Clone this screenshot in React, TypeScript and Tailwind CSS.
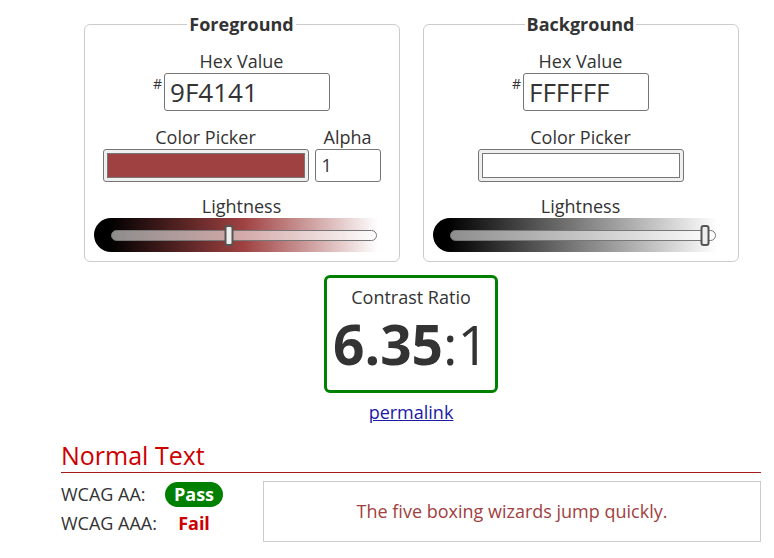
import React from "react";

const font = { fontFamily: "'Open Sans', 'Liberation Sans', sans-serif" };

type SliderProps = { from: string; mid: string; to: string; pos: number };

const LightnessSlider: React.FC<SliderProps> = ({ from, mid, to, pos }) => (
  <div
    className="relative mx-auto h-[34px] w-[296px] rounded-full"
    style={{ background: `linear-gradient(to right, ${from} 5%, ${mid}, ${to} 96%)` }}
  >
    <div className="absolute left-[17px] right-[13px] top-[12px] h-[11px] rounded-full border border-[#777] bg-white/55">
      <div
        className="absolute top-[-6px] h-[21px] w-[9px] -translate-x-1/2 rounded-[3px] border-2 border-[#555] bg-[#eee]"
        style={{ left: `${pos}%` }}
      />
    </div>
  </div>
);

type PanelProps = {
  title: string;
  hex: string;
  hexWidth: string;
  swatch: string;
  alpha?: boolean;
  gradientMid: string;
  pos: number;
};

const ColorPanel: React.FC<PanelProps> = ({ title, hex, hexWidth, swatch, alpha, gradientMid, pos }) => (
  <fieldset className="w-[316px] rounded-[6px] border border-[#ccc] px-0 pb-[9px]">
    <legend className="mx-auto px-[2px] text-[18px] font-bold leading-[24px] text-[#333]">{title}</legend>
    <div className="mt-[13px] text-center text-[18px] leading-[24px] text-[#333]">Hex Value</div>
    <div className="flex justify-center">
      <span className="mr-[2px] mt-[1px] text-[14px] leading-[20px] text-[#333]">#</span>
      <div
        className={`h-[38px] ${hexWidth} rounded-[3px] border border-[#767676] pl-[5px] text-[26px] leading-[36px] text-[#333]`}
      >
        {hex}
      </div>
    </div>
    <div className="mt-[14px] flex justify-center gap-[6px]">
      <div className="flex flex-col items-center">
        <div className="text-[18px] leading-[24px] text-[#333]">Color Picker</div>
        <div className="h-[33px] w-[206px] rounded-[3px] border border-[#767676] bg-[#efefef] px-[3px] py-[3px]">
          <div className="h-full w-full border border-[#777]" style={{ background: swatch }} />
        </div>
      </div>
      {alpha && (
        <div className="flex flex-col items-center">
          <div className="text-[18px] leading-[24px] text-[#333]">Alpha</div>
          <div className="h-[33px] w-[66px] rounded-[3px] border border-[#767676] pl-[6px] text-[18px] leading-[31px] text-[#333]">
            1
          </div>
        </div>
      )}
    </div>
    <div className="mt-[13px] text-center text-[18px] leading-[23px] text-[#333]">Lightness</div>
    <LightnessSlider from="#000" mid={gradientMid} to="#fff" pos={pos} />
  </fieldset>
);

export default function App() {
  return (
    <div className="min-h-[558px] w-[774px] bg-white" style={font}>
      <div className="ml-[61px] w-[700px] pt-[12px]">
        <div className="flex justify-center gap-[23px]">
          <ColorPanel
            title="Foreground"
            hex="9F4141"
            hexWidth="w-[166px]"
            swatch="#9f4141"
            alpha
            gradientMid="#9f4141"
            pos={44.5}
          />
          <ColorPanel
            title="Background"
            hex="FFFFFF"
            hexWidth="w-[126px]"
            swatch="#ffffff"
            gradientMid="#808080"
            pos={96.5}
          />
        </div>

        <div className="mx-auto mt-[13px] flex h-[118px] w-[174px] flex-col items-center rounded-[6px] border-[3px] border-[#008000]">
          <div className="mt-[8px] text-[18px] leading-[22px] text-[#333]">Contrast Ratio</div>
          <div className="mt-[11px] text-[55px] leading-[50px] text-[#333]">
            <span className="font-bold">6.35</span>
            <span>:1</span>
          </div>
        </div>
        <div className="mt-[7px] text-center text-[18px] leading-[24px]">
          <a href="#" className="text-[#1a1aa6] underline">
            permalink
          </a>
        </div>

        <h2 className="mt-[15px] border-b border-[#a51c1c] pb-[1px] text-[25px] leading-[32px] text-[#c00]">
          Normal Text
        </h2>

        <div className="mt-[7px] flex">
          <div className="w-[202px] text-[18px] text-[#333]">
            <div className="flex h-[29px] items-center">
              <span className="w-[104px]">WCAG AA:</span>
              <span className="flex w-[58px] justify-center">
                <span className="rounded-full bg-[#008000] px-[9px] text-[18px] font-bold leading-[25px] text-white">
                  Pass
                </span>
              </span>
            </div>
            <div className="flex h-[29px] items-center">
              <span className="w-[104px]">WCAG AAA:</span>
              <span className="w-[58px] text-center font-bold text-[#c00]">Fail</span>
            </div>
          </div>
          <div className="mt-[1px] flex h-[61px] flex-1 items-center justify-center border border-[#ccc] text-[18px] text-[#9f4141]">
            The five boxing wizards jump quickly.
          </div>
        </div>
      </div>
    </div>
  );
}
